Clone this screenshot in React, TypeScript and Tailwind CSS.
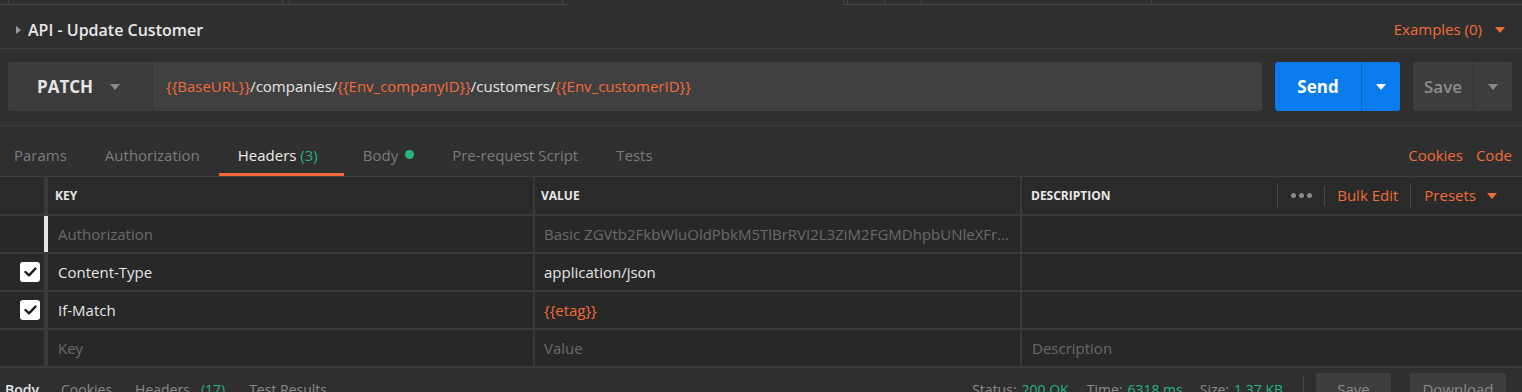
import React from "react";

const Tri = ({ dir = "down", color, w = 10, h = 6 }: { dir?: "down" | "right"; color: string; w?: number; h?: number }) =>
  dir === "down" ? (
    <svg width={w} height={h} viewBox={`0 0 ${w} ${h}`} className="shrink-0">
      <polygon points={`0,0 ${w},0 ${w / 2},${h}`} fill={color} />
    </svg>
  ) : (
    <svg width={h} height={w} viewBox={`0 0 ${h} ${w}`} className="shrink-0">
      <polygon points={`0,0 ${h},${w / 2} 0,${w}`} fill={color} />
    </svg>
  );

const Check = () => (
  <div className="w-[20px] h-[20px] rounded-[3px] bg-white flex items-center justify-center">
    <svg width="13" height="10" viewBox="0 0 13 10">
      <path d="M1.5 5 L5 8.3 L11.5 1.5" stroke="#1a1a1a" strokeWidth="2.4" fill="none" strokeLinecap="round" strokeLinejoin="round" />
    </svg>
  </div>
);

const O = "text-[#f26b3a]";

export default function App() {
  return (
    <div className="w-[1522px] h-[392px] overflow-hidden bg-[#2f2f2f] font-['Open_Sans',sans-serif] text-[15px] text-[#e6e6e6] flex flex-col">
      {/* top tab strip */}
      <div className="h-[5px] flex shrink-0">
        <div className="w-[8px] border-b border-[#484848]" />
        <div className="w-[275px] border-x border-b border-[#484848]" />
        <div className="w-[6px] border-b border-[#484848]" />
        <div className="w-[274px] border-x border-b border-[#484848]" />
        <div className="w-[6px] border-b border-[#484848]" />
        <div className="w-[274px]" />
        <div className="w-[5px] border-x border-b border-[#484848]" />
        <div className="w-[37px] border-r border-b border-[#484848]" />
        <div className="w-[37px] border-r border-b border-[#484848]" />
        <div className="w-[230px] border-r border-b border-[#484848]" />
        <div className="flex-1 border-b border-[#484848]" />
      </div>

      {/* title row */}
      <div className="h-[44px] shrink-0 border-b border-[#3e3e3e] flex items-center pt-[6px] pl-[16px] pr-[17px]">
        <Tri dir="right" color="#9a9a9a" w={8} h={5} />
        <span className="ml-[7px] text-[16px] font-semibold text-[#e8e8e8]">API - Update Customer</span>
        <div className="flex-1" />
        <span className={`${O} text-[15px]`}>Examples (0)</span>
        <span className="ml-[13px]"><Tri color="#f26b3a" w={10} h={6} /></span>
      </div>

      {/* url row */}
      <div className="h-[77px] shrink-0 border-b border-[#3e3e3e] pt-[13px] pl-[8px] pr-[10px] flex items-start">
        <div className="flex h-[49px] w-[1254px] rounded-[3px] overflow-hidden bg-[#404040]">
          <div className="w-[145px] bg-[#3c3c3c] border-r border-[#383838] flex items-center pl-[29px]">
            <span className="text-[17px] font-bold text-[#e6e6e6]">PATCH</span>
            <span className="ml-[17px]"><Tri color="#8a8a8a" w={10} h={6} /></span>
          </div>
          <div className="flex-1 flex items-center pl-[13px] text-[15px] text-[#e6e6e6]">
            <span className={O}>{"{{BaseURL}}"}</span>/companies/<span className={O}>{"{{Env_companyID}}"}</span>/customers/<span className={O}>{"{{Env_customerID}}"}</span>
          </div>
        </div>
        <div className="ml-[13px] flex h-[49px] w-[125px] rounded-[3px] overflow-hidden bg-[#097bed]">
          <div className="w-[87px] flex items-center justify-center text-[17px] font-bold text-white border-r border-[#0a67c4]">Send</div>
          <div className="flex-1 flex items-center justify-center"><Tri color="#ffffff" w={10} h={6} /></div>
        </div>
        <div className="ml-[13px] flex h-[49px] w-[99px] rounded-[3px] overflow-hidden bg-[#3e3e3e]">
          <div className="w-[61px] flex items-center justify-center text-[17px] font-semibold text-[#8c8c8c] border-r border-[#333333]">Save</div>
          <div className="flex-1 flex items-center justify-center"><Tri color="#8a8a8a" w={10} h={6} /></div>
        </div>
      </div>

      {/* tabs row */}
      <div className="h-[51px] shrink-0 border-b border-[#3e3e3e] flex items-end text-[15px] text-[#7c7c7c] pr-[10px]">
        <div className="pl-[14px] pb-[7px] border-b-[3px] border-transparent">Params</div>
        <div className="ml-[38px] pb-[7px] border-b-[3px] border-transparent">Authorization</div>
        <div className="ml-[19px] pl-[19px] pr-[26px] pb-[7px] border-b-[3px] border-[#f26b3a] text-[#ececec]">
          Headers <span className="text-[#26b47f]">(3)</span>
        </div>
        <div className="ml-[19px] pb-[7px] border-b-[3px] border-transparent flex items-center">
          Body <span className="ml-[7px] w-[9px] h-[9px] rounded-full bg-[#26b47f] inline-block" />
        </div>
        <div className="ml-[38px] pb-[7px] border-b-[3px] border-transparent">Pre-request Script</div>
        <div className="ml-[38px] pb-[7px] border-b-[3px] border-transparent">Tests</div>
        <div className="flex-1" />
        <div className={`${O} pb-[7px] border-b-[3px] border-transparent`}>Cookies</div>
        <div className={`${O} ml-[13px] pb-[7px] border-b-[3px] border-transparent`}>Code</div>
      </div>

      {/* table */}
      <div className="bg-[#282828] shrink-0">
        {/* header */}
        <div className="h-[39px] flex border-b-2 border-[#3a3a3a] bg-[#2a2a2a]">
          <div className="w-[48px] border-r-[4px] border-[#3a3a3a]" />
          <div className="w-[487px] border-r-2 border-[#3a3a3a] flex items-center pl-[7px] text-[12px] font-bold text-[#e8e8e8]">KEY</div>
          <div className="w-[487px] border-r-2 border-[#3a3a3a] flex items-center pl-[6px] text-[12px] font-bold text-[#e8e8e8]">VALUE</div>
          <div className="flex-1 flex items-center pl-[9px] text-[12px] font-bold text-[#e8e8e8]">
            DESCRIPTION
            <div className="flex-1" />
            <div className="w-px h-[25px] bg-[#484848]" />
            <div className="w-[46px] flex items-center justify-center gap-[3px]">
              <span className="w-[5px] h-[5px] rounded-full bg-[#8a8a8a]" />
              <span className="w-[5px] h-[5px] rounded-full bg-[#8a8a8a]" />
              <span className="w-[5px] h-[5px] rounded-full bg-[#8a8a8a]" />
            </div>
            <div className="w-px h-[20px] bg-[#484848]" />
            <span className={`${O} text-[15px] font-normal ml-[12px]`}>Bulk Edit</span>
            <div className="ml-[12px] w-px h-[25px] bg-[#484848]" />
            <span className={`${O} text-[15px] font-normal ml-[13px]`}>Presets</span>
            <span className="ml-[11px] mr-[25px]"><Tri color="#f26b3a" w={10} h={6} /></span>
          </div>
        </div>
        {[
          { cb: false, key: "Authorization", val: "Basic ZGVtb2FkbWluOldPbkM5TlBrRVI2L3ZiM2FGMDhpbUNleXFr...", dim: true, active: true },
          { cb: true, key: "Content-Type", val: "application/json" },
          { cb: true, key: "If-Match", val: "{{etag}}", orange: true },
          { cb: false, key: "Key", val: "Value", desc: "Description", ph: true },
        ].map((r, i) => (
          <div key={i} className="h-[38px] flex border-b-2 border-[#3a3a3a]">
            <div className={`w-[48px] border-r-[4px] ${r.active ? "border-[#e6e6e6]" : "border-[#3a3a3a]"} flex items-center pl-[20px]`}>
              {r.cb && <Check />}
            </div>
            <div className={`w-[487px] border-r-2 border-[#3a3a3a] flex items-center pl-[10px] ${r.dim || r.ph ? "text-[#6a6a6a]" : "text-[#e6e6e6]"}`}>{r.key}</div>
            <div className={`w-[487px] border-r-2 border-[#3a3a3a] flex items-center pl-[9px] overflow-hidden whitespace-nowrap ${r.dim || r.ph ? "text-[#6a6a6a]" : r.orange ? "text-[#f26b3a]" : "text-[#e6e6e6]"}`}>
              {r.val}
            </div>
            <div className="flex-1 flex items-center pl-[10px] text-[#6a6a6a]">{r.desc ?? ""}</div>
          </div>
        ))}
      </div>

      {/* response bar */}
      <div className="flex-1 bg-[#2f2f2f] flex items-start pl-[5px] pr-[16px] pt-[5px] text-[14px] text-[#8a8a8a]">
        <div className="flex items-center mt-[6px]">
          <span className="text-[#e8e8e8] font-semibold">Body</span>
          <span className="ml-[22px]">Cookies</span>
          <span className="ml-[23px]">Headers</span>
          <span className="ml-[11px] text-[#26b47f]">(17)</span>
          <span className="ml-[24px]">Test Results</span>
        </div>
        <div className="flex-1" />
        <div className="flex items-center mt-[6px]">
          <span>Status:</span>
          <span className="ml-[5px] text-[#26b47f]">200 OK</span>
          <span className="ml-[18px]">Time:</span>
          <span className="ml-[5px] text-[#26b47f]">6318 ms</span>
          <span className="ml-[17px]">Size:</span>
          <span className="ml-[5px] text-[#26b47f]">1.37 KB</span>
        </div>
        <div className="ml-[20px] w-px h-[30px] bg-[#484848] mt-[4px]" />
        <div className="ml-[12px] w-[75px] h-[32px] rounded-[3px] bg-[#3e3e3e] flex items-center justify-center text-[#8a8a8a] text-[15px]">Save</div>
        <div className="ml-[19px] w-[96px] h-[32px] rounded-[3px] bg-[#3e3e3e] flex items-center justify-center text-[#8a8a8a] text-[15px]">Download</div>
      </div>
    </div>
  );
}
